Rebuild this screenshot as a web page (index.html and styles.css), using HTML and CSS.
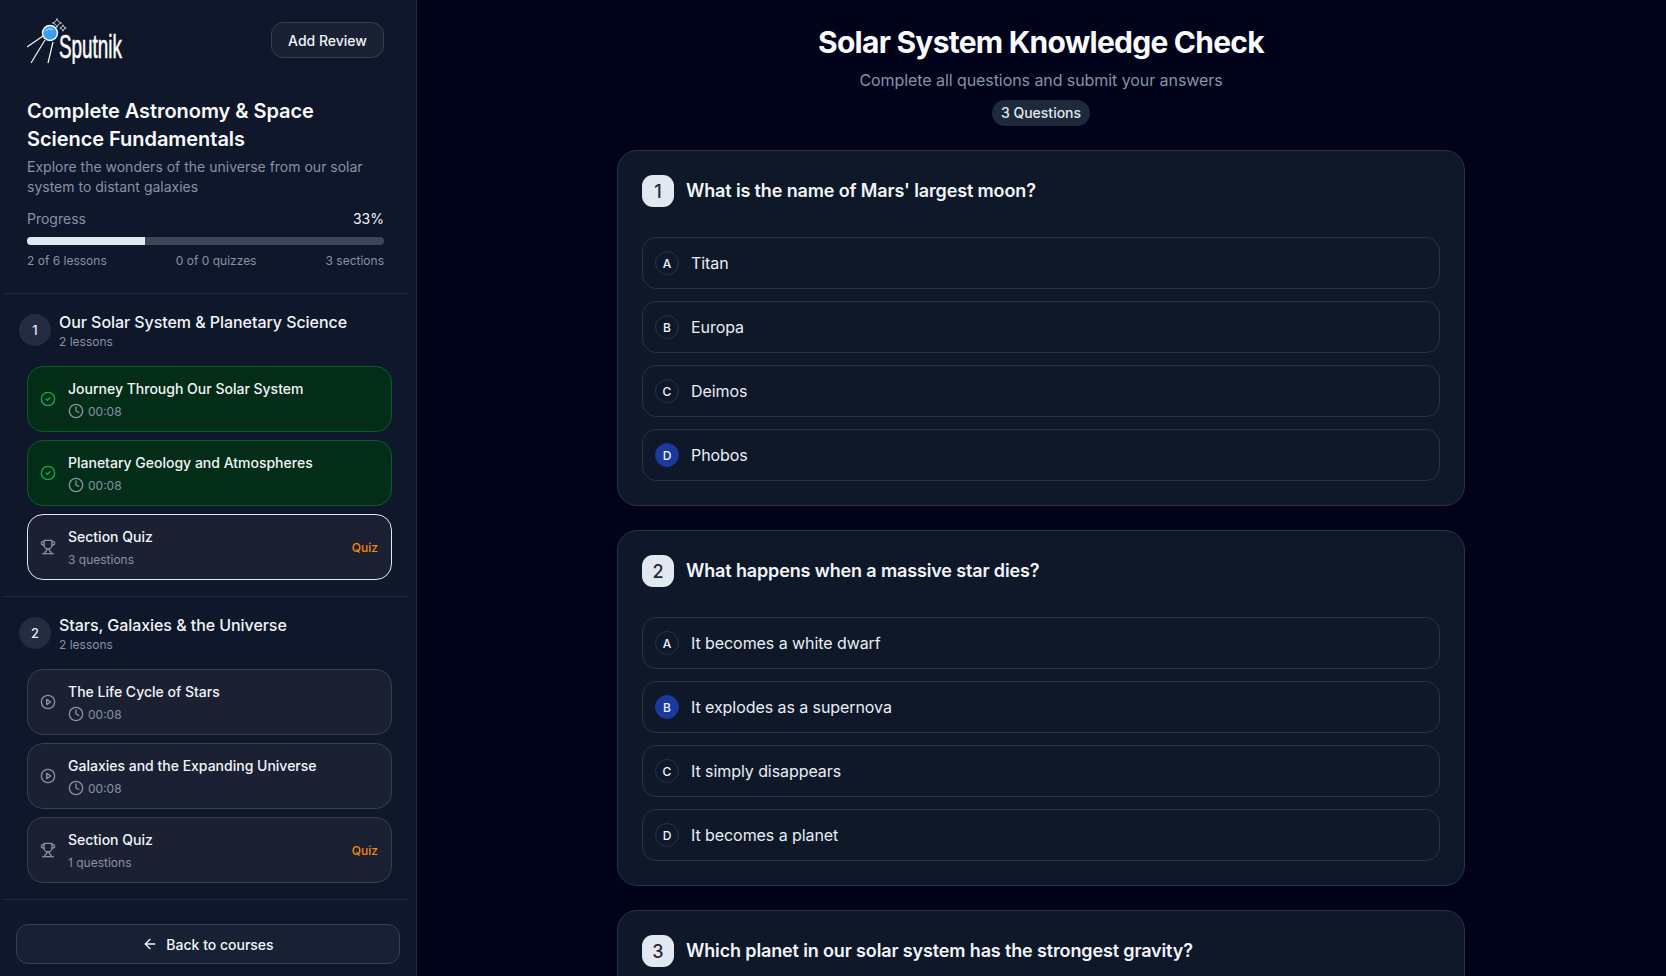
FILE: index.html
```html
<!DOCTYPE html>
<html lang="en">
<head>
<meta charset="UTF-8">
<meta name="viewport" content="width=device-width, initial-scale=1.0">
<title>Solar System Knowledge Check</title>
<link rel="stylesheet" href="styles.css">
</head>
<body>

<svg class="icon-defs" aria-hidden="true">
    <symbol id="i-check" viewBox="0 0 24 24"><circle cx="12" cy="12" r="10"/><path d="m9 12 2 2 4-4"/></symbol>
    <symbol id="i-clock" viewBox="0 0 24 24"><circle cx="12" cy="12" r="10"/><polyline points="12 6 12 12 16 14"/></symbol>
    <symbol id="i-play" viewBox="0 0 24 24"><circle cx="12" cy="12" r="10"/><polygon points="10 8 16 12 10 16 10 8"/></symbol>
    <symbol id="i-trophy" viewBox="0 0 24 24"><path d="M6 9H4.5a2.5 2.5 0 0 1 0-5H6"/><path d="M18 9h1.5a2.5 2.5 0 0 0 0-5H18"/><path d="M4 22h16"/><path d="M10 14.66V17c0 .55-.47.98-.97 1.21C7.85 18.75 7 20.24 7 22"/><path d="M14 14.66V17c0 .55.47.98.97 1.21C16.15 18.75 17 20.24 17 22"/><path d="M18 2H6v7a6 6 0 0 0 12 0V2Z"/></symbol>
    <symbol id="i-back" viewBox="0 0 24 24"><path d="m12 19-7-7 7-7"/><path d="M19 12H5"/></symbol>
</svg>

<div class="layout">

    <!-- sidebar -->
    <aside class="sidebar">
        <div class="sidebar-scroll">
            <div class="course-info">
                <div class="top-row">
                    <svg class="logo" viewBox="0 0 155 46" width="155" height="46">
                        <g class="logo-lines">
                            <path d="M16 18 0 29"/>
                            <path d="M18 22 4 45"/>
                            <path d="M26 24 21 45"/>
                        </g>
                        <circle class="logo-ball" cx="23" cy="15" r="7.500"/>
                        <path class="logo-shine" d="M18.500 13q3-3.500 7.500-1.500"/>
                        <g class="logo-stars">
                            <path d="M30 .5q.5 4 4.500 4.500-4 .5-4.500 4.500-.5-4-4.500-4.500 4-.5 4.500-4.500Z"/>
                            <path d="M36 6.800q.4 2.900 3.200 3.200-2.800.3-3.200 3.200-.4-2.900-3.200-3.200 2.800-.3 3.200-3.200Z"/>
                        </g>
                        <text class="logo-text" x="32" y="40" textLength="63" lengthAdjust="spacingAndGlyphs">Sputnik</text>
                    </svg>
                    <button class="review-btn">Add Review</button>
                </div>
                <h1>Complete Astronomy &amp; Space Science Fundamentals</h1>
                <p class="course-desc">Explore the wonders of the universe from our solar system to distant galaxies</p>
                <div class="progress-row">
                    <span>Progress</span>
                    <span class="progress-num">33%</span>
                </div>
                <div class="progress-bar"><div class="progress-fill" style="width: 33%"></div></div>
                <div class="stats-row">
                    <span>2 of 6 lessons</span>
                    <span>0 of 0 quizzes</span>
                    <span>3 sections</span>
                </div>
            </div>

            <section class="section">
                <div class="section-head">
                    <div class="section-num">1</div>
                    <div>
                        <div class="section-title">Our Solar System &amp; Planetary Science</div>
                        <div class="section-sub">2 lessons</div>
                    </div>
                </div>
                <div class="lesson done">
                    <svg class="icon status"><use href="#i-check"/></svg>
                    <div class="lesson-body">
                        <div class="lesson-title">Journey Through Our Solar System</div>
                        <div class="lesson-meta"><svg class="icon"><use href="#i-clock"/></svg>00:08</div>
                    </div>
                </div>
                <div class="lesson done">
                    <svg class="icon status"><use href="#i-check"/></svg>
                    <div class="lesson-body">
                        <div class="lesson-title">Planetary Geology and Atmospheres</div>
                        <div class="lesson-meta"><svg class="icon"><use href="#i-clock"/></svg>00:08</div>
                    </div>
                </div>
                <div class="lesson active">
                    <svg class="icon status"><use href="#i-trophy"/></svg>
                    <div class="lesson-body">
                        <div class="lesson-title">Section Quiz</div>
                        <div class="lesson-meta">3 questions</div>
                    </div>
                    <span class="quiz-tag">Quiz</span>
                </div>
            </section>

            <section class="section">
                <div class="section-head">
                    <div class="section-num">2</div>
                    <div>
                        <div class="section-title">Stars, Galaxies &amp; the Universe</div>
                        <div class="section-sub">2 lessons</div>
                    </div>
                </div>
                <div class="lesson">
                    <svg class="icon status"><use href="#i-play"/></svg>
                    <div class="lesson-body">
                        <div class="lesson-title">The Life Cycle of Stars</div>
                        <div class="lesson-meta"><svg class="icon"><use href="#i-clock"/></svg>00:08</div>
                    </div>
                </div>
                <div class="lesson">
                    <svg class="icon status"><use href="#i-play"/></svg>
                    <div class="lesson-body">
                        <div class="lesson-title">Galaxies and the Expanding Universe</div>
                        <div class="lesson-meta"><svg class="icon"><use href="#i-clock"/></svg>00:08</div>
                    </div>
                </div>
                <div class="lesson">
                    <svg class="icon status"><use href="#i-trophy"/></svg>
                    <div class="lesson-body">
                        <div class="lesson-title">Section Quiz</div>
                        <div class="lesson-meta">1 questions</div>
                    </div>
                    <span class="quiz-tag">Quiz</span>
                </div>
            </section>
        </div>

        <div class="sidebar-foot">
            <button class="back-btn"><svg class="icon"><use href="#i-back"/></svg>Back to courses</button>
        </div>
    </aside>

    <!-- quiz -->
    <main class="main">
        <div class="quiz">
            <header class="quiz-head">
                <h2>Solar System Knowledge Check</h2>
                <p>Complete all questions and submit your answers</p>
                <span class="count-pill">3 Questions</span>
            </header>

            <div class="card">
                <div class="question">
                    <div class="q-num">1</div>
                    <h3>What is the name of Mars' largest moon?</h3>
                </div>
                <div class="options">
                    <div class="option"><span class="letter">A</span>Titan</div>
                    <div class="option"><span class="letter">B</span>Europa</div>
                    <div class="option"><span class="letter">C</span>Deimos</div>
                    <div class="option"><span class="letter picked">D</span>Phobos</div>
                </div>
            </div>

            <div class="card">
                <div class="question">
                    <div class="q-num">2</div>
                    <h3>What happens when a massive star dies?</h3>
                </div>
                <div class="options">
                    <div class="option"><span class="letter">A</span>It becomes a white dwarf</div>
                    <div class="option"><span class="letter picked">B</span>It explodes as a supernova</div>
                    <div class="option"><span class="letter">C</span>It simply disappears</div>
                    <div class="option"><span class="letter">D</span>It becomes a planet</div>
                </div>
            </div>

            <div class="card">
                <div class="question">
                    <div class="q-num">3</div>
                    <h3>Which planet in our solar system has the strongest gravity?</h3>
                </div>
            </div>
        </div>
    </main>
</div>

</body>
</html>
```

FILE: styles.css
```css
* {
    box-sizing: border-box;
}

html, body {
    height: 100%;
    margin: 0;
    overflow: hidden;
}

body {
    font-family: Inter, "Liberation Sans", sans-serif;
    background-color: #020617;
    color: #f1f5f9;
}

button {
    font-family: inherit;
    cursor: pointer;
}

.icon-defs {
    display: none;
}

.icon {
    width: 16px;
    height: 16px;
    flex-shrink: 0;
    fill: none;
    stroke: currentColor;
    stroke-width: 2;
    stroke-linecap: round;
    stroke-linejoin: round;
}

.layout {
    display: flex;
    height: 976px;
}

/* sidebar */
.sidebar {
    position: relative;
    z-index: 1;
    width: 416px;
    flex-shrink: 0;
    display: flex;
    flex-direction: column;
    background-color: #0f172a;
    box-shadow: 1px 0 0 #1e293b;
}

.sidebar-scroll {
    flex: 1;
    min-height: 0;
    overflow: hidden;
    margin-left: 3px;
    margin-right: 8px;
}

.course-info {
    height: 294px;
    padding: 18px 24px 0;
    border-bottom: 1px solid #1e293b;
}

.top-row {
    display: flex;
    justify-content: space-between;
    align-items: flex-start;
    height: 79px;
}

.logo {
    display: block;
}

.logo-lines path {
    fill: none;
    stroke: #f5f7fa;
    stroke-width: 1.2;
}

.logo-ball {
    fill: #3a9fee;
    stroke: #ffffff;
    stroke-width: 1.4;
}

.logo-shine {
    fill: none;
    stroke: #bfe2fb;
    stroke-width: 1;
}

.logo-stars path {
    fill: none;
    stroke: #e8ecf2;
    stroke-width: 0.8;
}

.logo-text {
    font-family: "Liberation Sans", sans-serif;
    font-size: 33px;
    fill: #ffffff;
    stroke: #ffffff;
    stroke-width: 0.5;
}

.review-btn {
    margin-top: 4px;
    height: 36px;
    width: 113px;
    padding: 0;
    font-size: 14px;
    font-weight: 500;
    color: #f1f5f9;
    background-color: #1a2133;
    border: 1px solid #334155;
    border-radius: 12px;
}

h1 {
    margin: 0;
    font-size: 20px;
    line-height: 28px;
    font-weight: 600;
    letter-spacing: -0.05px;
    color: #f8fafc;
}

.course-desc {
    margin: 4px 0 0;
    font-size: 14px;
    line-height: 20px;
    color: #8592a8;
}

.progress-row {
    display: flex;
    justify-content: space-between;
    margin-top: 12px;
    font-size: 14px;
    line-height: 20px;
    color: #8592a8;
}

.progress-num {
    color: #f1f5f9;
}

.progress-bar {
    height: 8px;
    margin-top: 8px;
    background-color: #3a4557;
    border-radius: 4px;
    overflow: hidden;
}

.progress-fill {
    height: 100%;
    background-color: #e2e8f0;
}

.stats-row {
    display: flex;
    justify-content: space-between;
    margin-top: 8px;
    font-size: 12px;
    line-height: 16px;
    color: #8592a8;
}

.section {
    height: 303px;
    padding: 16px 16px 0 24px;
    border-bottom: 1px solid #1e293b;
}

.section-head {
    display: flex;
    align-items: center;
    gap: 8px;
    margin-left: -8px;
    margin-bottom: 16px;
}

.section-num {
    width: 32px;
    height: 32px;
    display: flex;
    align-items: center;
    justify-content: center;
    flex-shrink: 0;
    border-radius: 50%;
    background-color: #232c40;
    font-size: 13px;
    font-weight: 500;
    color: #e2e8f0;
}

.section-title {
    font-size: 16px;
    line-height: 24px;
    font-weight: 500;
    letter-spacing: -0.06px;
    color: #f1f5f9;
}

.section-sub {
    font-size: 12px;
    line-height: 16px;
    color: #8592a8;
}

.lesson {
    display: flex;
    align-items: center;
    gap: 12px;
    height: 66px;
    margin-bottom: 8px;
    padding: 12px;
    background-color: #1b2133;
    border: 1px solid #334155;
    border-radius: 16px;
}

.lesson .status {
    color: #8592a8;
}

.lesson.done {
    background-color: #032d17;
    border-color: #0b5b2b;
}

.lesson.done .status {
    color: #0fae4e;
}

.lesson.active {
    border-color: #e2e8f0;
}

.lesson-body {
    flex: 1;
    min-width: 0;
}

.lesson-title {
    font-size: 14px;
    line-height: 20px;
    font-weight: 500;
    color: #f1f5f9;
}

.lesson-meta {
    display: flex;
    align-items: center;
    gap: 4px;
    height: 16px;
    margin-top: 4px;
    font-size: 12px;
    color: #8592a8;
}

.quiz-tag {
    margin-right: 1px;
    font-size: 12px;
    font-weight: 500;
    color: #f28a0a;
}

.sidebar-foot {
    padding: 0 16px 12px;
}

.back-btn {
    width: 100%;
    height: 40px;
    display: flex;
    align-items: center;
    justify-content: center;
    gap: 8px;
    font-size: 14px;
    font-weight: 500;
    color: #f1f5f9;
    background-color: #182133;
    border: 1px solid #334155;
    border-radius: 12px;
}

/* main quiz column */
.main {
    flex: 1;
    min-width: 0;
    overflow: hidden;
    padding: 24px;
    background-color: #00031a;
}

.quiz {
    width: 848px;
    margin: 0 auto;
}

.quiz-head {
    text-align: center;
    margin-bottom: 24px;
}

h2 {
    margin: 0;
    font-size: 30px;
    line-height: 36px;
    font-weight: 700;
    letter-spacing: -0.75px;
    color: #f8fafc;
}

.quiz-head p {
    margin: 8px 0;
    font-size: 16px;
    line-height: 24px;
    letter-spacing: -0.07px;
    color: #8592a8;
}

.count-pill {
    display: inline-block;
    padding: 3px 9px;
    font-size: 14px;
    line-height: 20px;
    font-weight: 500;
    color: #e2e8f0;
    background-color: #1e293b;
    border-radius: 13px;
    vertical-align: top;
}

.card {
    padding: 24px;
    margin-bottom: 24px;
    background-color: #0f1828;
    border: 1px solid #293344;
    border-radius: 20px;
}

.question {
    display: flex;
    align-items: center;
    gap: 12px;
    margin-bottom: 30px;
}

.q-num {
    width: 32px;
    height: 32px;
    display: flex;
    align-items: center;
    justify-content: center;
    flex-shrink: 0;
    border-radius: 11px;
    background-color: #e2e8f0;
    font-size: 18px;
    font-weight: 500;
    color: #1e293b;
}

h3 {
    margin: 0;
    font-size: 18px;
    line-height: 28px;
    font-weight: 600;
    letter-spacing: -0.14px;
    color: #f1f5f9;
}

.options {
    display: flex;
    flex-direction: column;
    gap: 12px;
}

.option {
    display: flex;
    align-items: center;
    gap: 12px;
    height: 52px;
    padding: 0 12px;
    font-size: 16px;
    letter-spacing: -0.07px;
    color: #e9eef5;
    background-color: #0f1828;
    border: 1px solid #293344;
    border-radius: 14px;
}

.letter {
    width: 24px;
    height: 24px;
    display: flex;
    align-items: center;
    justify-content: center;
    flex-shrink: 0;
    border-radius: 50%;
    border: 1px solid #293344;
    font-size: 12px;
    font-weight: 500;
    letter-spacing: 0;
    color: #f1f5f9;
}

.letter.picked {
    background-color: #1a3a9e;
    border-color: #1a3a9e;
}
```
